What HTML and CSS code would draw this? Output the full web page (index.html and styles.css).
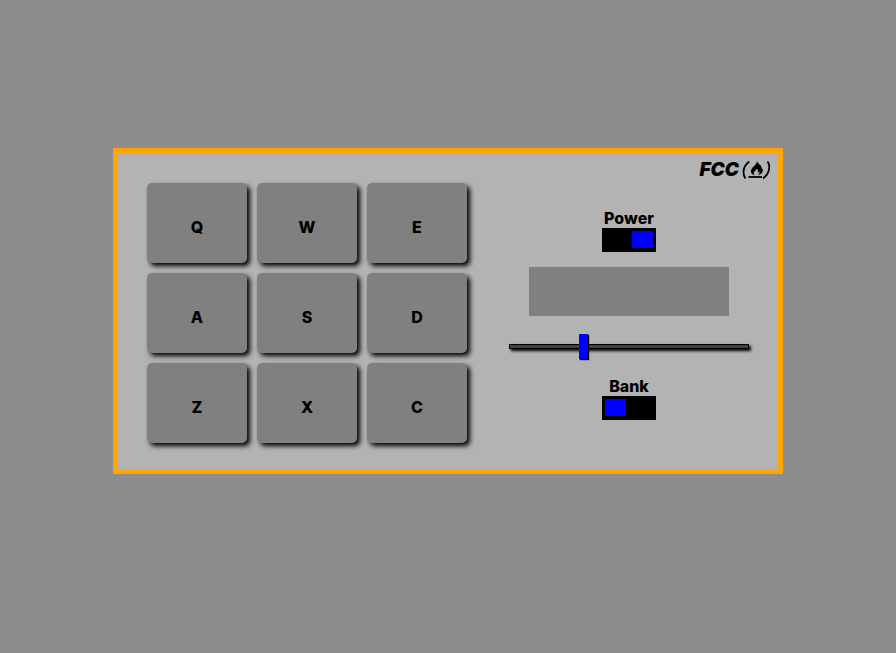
FILE: index.html
```html
<!DOCTYPE html>
<html lang="en">
<head>
  <meta charset="utf-8">
  <meta name="viewport" content="width=device-width, initial-scale=1">
  <title>Drum Machine</title>
  <link rel="stylesheet" href="styles.css">
</head>
<body>
  <main class="machine">
    <header class="brand">
      <span class="brand-name">FCC</span>
      <svg class="brand-icon" viewBox="0 0 28 20" aria-hidden="true">
        <path class="paren" d="M7.300 1.500C3.500 4.300 1.500 8 1.500 12.200c0 2.600.7 4.600 2 6.300"/>
        <path class="paren" d="M25.500 1.500c1.200 1.500 1.800 3.300 1.800 5.500 0 4.700-2.700 8.700-6.300 11.500"/>
        <path class="base" d="M6.500 17h13.500"/>
        <path d="M15 .8c.3 3 4.800 4.300 4.800 7.400 0 .5-.1 1-.3 1.400.7-.2 1-.7 1.200-1.400 1 3.200-1.100 6.200-4.700 7 1.300-1.200 1.900-2.600 1.300-4-.4.800-.9 1.200-1.600 1.200.4-1.700 0-3-1-3.900-.5 1.900-2.500 2.600-2.900 4.300-.2.900.1 1.700.6 2.400-3.400-.9-4.300-3.800-2.700-6.400C11.300 6 15 4.900 15 .8z"/>
      </svg>
    </header>
    <div class="deck">
      <div class="pads">
        <button class="pad" type="button">Q</button>
        <button class="pad" type="button">W</button>
        <button class="pad" type="button">E</button>
        <button class="pad" type="button">A</button>
        <button class="pad" type="button">S</button>
        <button class="pad" type="button">D</button>
        <button class="pad" type="button">Z</button>
        <button class="pad" type="button">X</button>
        <button class="pad" type="button">C</button>
      </div>
      <div class="controls">
        <div class="field">
          <label for="power">Power</label>
          <input class="switch" type="checkbox" id="power" checked>
        </div>
        <output class="display"></output>
        <input class="volume" type="range" min="0" max="1" step="0.01" value="0.3" aria-label="Volume">
        <div class="field">
          <label for="bank">Bank</label>
          <input class="switch" type="checkbox" id="bank">
        </div>
      </div>
    </div>
  </main>
</body>
</html>
```
FILE: styles.css
```css
* {
  box-sizing: border-box;
}

body {
  margin: 0;
  min-height: 100vh;
  padding: 0 16px 32px;
  display: flex;
  align-items: center;
  justify-content: center;
  background: #8d8d8d;
  color: #000;
  font: 800 16px/20px Inter, "Liberation Sans", sans-serif;
}

.machine {
  width: 100%;
  max-width: 670px;
  border: 5px solid orange;
  background: #b3b3b3;
}

.brand {
  display: flex;
  align-items: center;
  justify-content: flex-end;
  gap: 3px;
  height: 30px;
  padding: 4px 8px 0 0;
}

.brand-name {
  font-size: 19px;
  font-style: italic;
  font-weight: 900;
}

.brand-icon {
  width: 28px;
  height: 20px;
}

.paren,
.base {
  fill: none;
  stroke: #000;
  stroke-width: 1.8;
}

.deck {
  display: flex;
  flex-wrap: wrap;
  align-items: center;
  justify-content: space-between;
  gap: 20px;
  padding: 0 29px 26px;
}

.pads {
  display: grid;
  grid-template-columns: repeat(3, 100px);
  grid-auto-rows: 80px;
  gap: 10px;
}

.pad {
  padding: 8px 0 0;
  border: 0;
  border-radius: 5px;
  background: gray;
  box-shadow: 3px 3px 5px #000;
  color: #000;
  font: inherit;
}

.controls {
  display: flex;
  flex-direction: column;
  align-items: center;
  gap: 15px;
  width: 240px;
  padding-top: 2px;
}

.field {
  display: flex;
  flex-direction: column;
  align-items: center;
}

.switch {
  appearance: none;
  display: flex;
  width: 54px;
  height: 24px;
  margin: 0;
  padding: 3px;
  background: #000;
}

.switch::before {
  content: "";
  width: 21px;
  height: 17px;
  background: blue;
}

.switch:checked {
  justify-content: flex-end;
}

.display {
  width: 200px;
  height: 49px;
  background: gray;
}

.volume {
  appearance: none;
  width: 100%;
  height: 30px;
  margin: 0;
  padding-top: 1px;
  background: transparent;
}

.volume::-webkit-slider-runnable-track {
  height: 5px;
  border: 1px solid #000;
  background: #424242;
  box-shadow: 2px 2px 3px #000;
}

.volume::-webkit-slider-thumb {
  appearance: none;
  width: 9px;
  height: 25px;
  margin-top: -11px;
  background: blue;
  box-shadow: 1px 1px 1px #000;
}
```
